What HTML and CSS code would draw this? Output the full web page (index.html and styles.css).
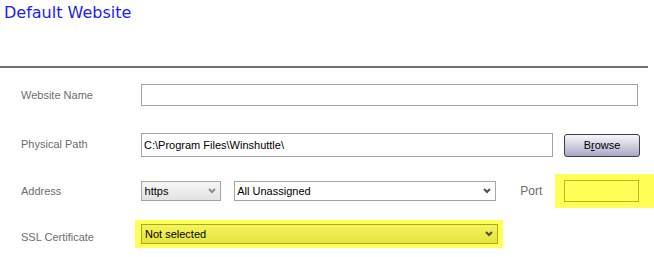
FILE: index.html
```html
<html>
<head>
  <title>Default Website</title>
  <link rel="stylesheet" href="styles.css">
</head>
<body>
  <div class="header">
    <h1 class="title">Default Website</h1>
  </div>
  <div class="divider"></div>

  <div class="form">
    <div class="row row-name">
      <label class="label" for="siteName">Website Name</label>
      <input class="text-input name-input" type="text" id="siteName" value="">
    </div>

    <div class="row row-path">
      <label class="label path-label" for="physPath">Physical Path</label>
      <input class="text-input path-input" type="text" id="physPath" value="C:\Program Files\Winshuttle\">
      <button class="browse-btn" type="button">B<u>r</u>owse</button>
    </div>

    <div class="row row-address">
      <label class="label" for="protocol">Address</label>
      <div class="select-wrap protocol-wrap">
        <select class="select protocol-select" id="protocol">
          <option>https</option>
          <option>http</option>
        </select>
        <svg class="chevron chevron-light" width="8" height="6" viewBox="0 0 8 6"><polyline points="1,1 4,4 7,1" fill="none" stroke-width="2"/></svg>
      </div>
      <div class="select-wrap ip-wrap">
        <select class="select ip-select" id="ipAddress">
          <option>All Unassigned</option>
        </select>
        <svg class="chevron" width="8" height="6" viewBox="0 0 8 6"><polyline points="1,1 4,4 7,1" fill="none" stroke-width="2"/></svg>
      </div>
      <label class="port-label" for="port">Port</label>
      <div class="highlight port-highlight">
        <input class="text-input port-input" type="text" id="port" value="">
      </div>
    </div>

    <div class="row row-ssl">
      <label class="label ssl-label" for="sslCert">SSL Certificate</label>
      <div class="highlight ssl-highlight">
        <div class="select-wrap ssl-wrap">
          <select class="select ssl-select" id="sslCert">
            <option>Not selected</option>
          </select>
          <svg class="chevron" width="8" height="6" viewBox="0 0 8 6"><polyline points="1,1 4,4 7,1" fill="none" stroke-width="2"/></svg>
        </div>
      </div>
    </div>
  </div>
</body>
</html>
```

FILE: styles.css
```css
body {
  margin: 0;
  background-color: #FFF;
  font-family: "Liberation Sans", Arial, sans-serif;
  font-size: 11px;
  overflow: hidden;
}
.header {
  height: 66px;
}
.title {
  margin: 0;
  padding: 3px 0 0 4px;
  font-family: "DejaVu Sans", Verdana, sans-serif;
  font-size: 16px;
  font-weight: normal;
  line-height: 20px;
  color: #1C1CF5;
}
.divider {
  height: 2px;
  margin-right: 6px;
  background-color: #707070;
}
.form {
  padding-top: 16px;
}
.row {
  display: flex;
  align-items: center;
}
.label {
  width: 120px;
  padding-left: 21px;
  color: #6D6D6D;
}
.path-label {
  padding-bottom: 3px;
}
.row-name {
  height: 22px;
}
.row-path {
  height: 24px;
  margin-top: 27px;
}
.row-address {
  height: 34px;
  margin-top: 17px;
}
.row-ssl {
  height: 28px;
  margin-top: 12px;
}
.text-input {
  box-sizing: border-box;
  margin: 0;
  padding: 0 2px;
  border: 1px solid #A3A3A3;
  background-color: #FFF;
  font-family: "Liberation Sans", Arial, sans-serif;
  font-size: 11px;
  color: #000;
  outline: none;
}
.name-input {
  width: 497px;
  height: 22px;
}
.path-input {
  width: 412px;
  height: 24px;
}
.browse-btn {
  box-sizing: border-box;
  width: 76px;
  height: 23px;
  margin-left: 11px;
  padding: 0;
  border: 1px solid #3C3C4A;
  border-radius: 3px;
  background: linear-gradient(#F7F7FB, #D4D4E2 45%, #A9A9C6);
  font-family: "Liberation Sans", Arial, sans-serif;
  font-size: 11px;
  color: #000;
}
.select-wrap {
  position: relative;
  height: 20px;
}
.select {
  box-sizing: border-box;
  width: 100%;
  height: 20px;
  margin: 0;
  padding: 0 0 0 3px;
  border: 1px solid #A5A5A5;
  border-radius: 0;
  appearance: none;
  -webkit-appearance: none;
  background-color: #FFF;
  font-family: "Liberation Sans", Arial, sans-serif;
  font-size: 11px;
  color: #000;
  outline: none;
}
.chevron {
  position: absolute;
  right: 5px;
  top: 7px;
  stroke: #4E4E4E;
}
.chevron-light {
  stroke: #8A8A8A;
}
.protocol-wrap {
  width: 81px;
}
.protocol-select {
  background: linear-gradient(#F6F6F6, #E2E2E2);
}
.ip-wrap {
  width: 263px;
  margin-left: 13px;
}
.ip-select {
  padding-left: 2px;
}
.port-label {
  margin-left: 24px;
  font-size: 12px;
  color: #6D6D6D;
}
.highlight {
  box-sizing: border-box;
  background-color: #FFFF57;
}
.port-highlight {
  width: 99px;
  height: 34px;
  margin-left: 13px;
  padding: 6px 0 0 9px;
}
.port-input {
  width: 75px;
  height: 22px;
  border-color: #B7B720;
  background-color: #FFFF57;
}
.ssl-label {
  width: 114px;
  padding-top: 5px;
}
.ssl-highlight {
  height: 28px;
  padding: 4px 5px 4px 6px;
}
.ssl-wrap {
  width: 357px;
}
.ssl-select {
  border-color: #A9A91E;
  background: linear-gradient(#F4F45C, #E4E43E);
}
```
